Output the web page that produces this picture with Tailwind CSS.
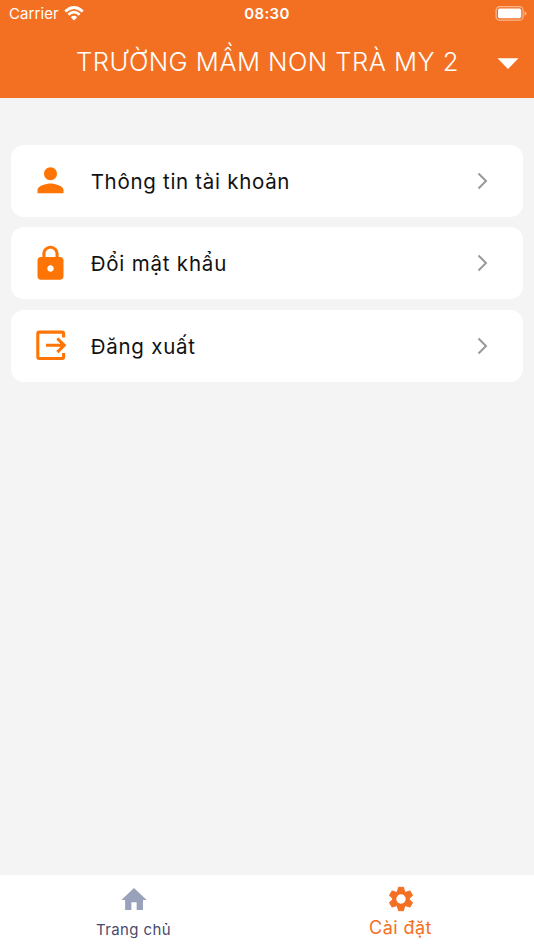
<!DOCTYPE html>
<html lang="vi">
<head>
<meta charset="utf-8">
<title>Cài đặt</title>
<script src="https://cdn.jsdelivr.net/npm/@tailwindcss/browser@4"></script>
</head>
<body class="w-[534px] h-[950px] overflow-hidden bg-[#f4f4f4] flex flex-col font-['Inter','Noto_Sans',sans-serif]">
<header class="h-[98.4px] shrink-0 bg-[#f37022] text-white">
  <div class="h-7 grid grid-cols-3 items-center pl-[9px] pr-[7px]">
    <div class="flex items-center gap-[5px]">
      <span class="text-[15px] leading-7 tracking-[0.1px]">Carrier</span>
      <svg class="w-5 h-[15px] -mt-[2px]" viewBox="0 0 20 15" fill="none" stroke="#fff" stroke-width="2.7"><path d="M1.200 5.400Q10-2.400 18.800 5.400M4.400 8.700Q10 3.700 15.600 8.700"/><path d="M6.800 11.200Q10 8.500 13.200 11.200L10 14.400Z" fill="#fff" stroke="none"/></svg>
    </div>
    <span class="text-center text-[15px] font-semibold leading-7 tracking-[0.4px] -ml-[2px]">08:30</span>
    <svg class="justify-self-end w-[32px] h-[15px] -mt-[2px]" viewBox="0 0 32 15"><rect x="1.1" y=".6" width="27" height="13.6" rx="3.8" fill="none" stroke="#fff" stroke-opacity=".5" stroke-width="1.2"/><rect x="3" y="2.5" width="23.2" height="9.8" rx="2" fill="#fff"/><path d="M29.7 5.2Q31.4 5.7 31.4 7.4T29.7 9.6Z" fill="#fff" fill-opacity=".55"/></svg>
  </div>
  <div class="h-[70px] flex items-center pl-[76px] pr-[15px] justify-between">
    <h1 class="text-[25.6px] font-light leading-[68px] tracking-[0.45px] whitespace-nowrap -mt-[2px]">TRƯỜNG MẦM NON TRÀ MY 2</h1>
    <svg class="w-[22px] h-[11px]" viewBox="0 0 22 11"><path d="M.5 .3H21.500L11 10.900Z" fill="#fff"/></svg>
  </div>
</header>
<main class="flex-1 pt-[46.6px] px-[10.7px] flex flex-col gap-[10.5px]">
  <div class="h-[72px] shrink-0 rounded-[13px] bg-white flex items-center pl-5 pr-[35px]">
    <svg class="w-[39px] h-[39px]" viewBox="0 0 24 24" fill="#ff7505"><path d="M12 11.800c2.210 0 4-1.790 4-4s-1.790-4-4-4-4 1.790-4 4 1.790 4 4 4zm0 2c-2.670 0-8 1.340-8 4v2h16v-2c0-2.660-5.330-4-8-4z"/></svg>
    <span class="ml-[21px] mt-[2px] flex-1 text-[20.5px] tracking-[0.7px] text-[#111]">Thông tin tài khoản</span>
    <svg class="w-[11px] h-[18px]" viewBox="0 0 11 18" fill="none" stroke="#999" stroke-width="2"><path d="M1.500 1.500L9 9L1.500 16.500"/></svg>
  </div>
  <div class="h-[72px] shrink-0 rounded-[13px] bg-white flex items-center pl-5 pr-[35px]">
    <svg class="w-[39px] h-[39px]" viewBox="0 0 24 24" fill="#ff7505"><path d="M18 8h-1V6c0-2.760-2.240-5-5-5S7 3.240 7 6v2H6c-1.100 0-2 .9-2 2v10c0 1.100.9 2 2 2h12c1.100 0 2-.9 2-2V10c0-1.100-.9-2-2-2zm-6 9c-1.100 0-2-.9-2-2s.9-2 2-2 2 .9 2 2-.9 2-2 2zm3.100-9H8.900V6c0-1.710 1.390-3.100 3.100-3.100s3.100 1.390 3.100 3.100v2z"/></svg>
    <span class="ml-[21px] mt-[2px] flex-1 text-[20.5px] tracking-[0.8px] text-[#111]">Đổi mật khẩu</span>
    <svg class="w-[11px] h-[18px]" viewBox="0 0 11 18" fill="none" stroke="#999" stroke-width="2"><path d="M1.500 1.500L9 9L1.500 16.500"/></svg>
  </div>
  <div class="h-[72px] shrink-0 rounded-[13px] bg-white flex items-center pl-5 pr-[35px]">
    <svg class="w-[39px] h-[39px]" viewBox="0 0 39 39" fill="none" stroke="#ff7505" stroke-width="3.1"><path d="M32.600 11.500V7.500Q32.600 6.100 31.200 6.100H8.200Q6.800 6.100 6.800 7.500V31.100Q6.800 32.500 8.200 32.500H31.200Q32.600 32.500 32.600 31.100V27.100M15 19.300H33M26.400 12.500L33.200 19.300L26.400 26.100"/></svg>
    <span class="ml-[21px] mt-[3px] flex-1 text-[20.5px] tracking-[0.75px] text-[#111]">Đăng xuất</span>
    <svg class="w-[11px] h-[18px]" viewBox="0 0 11 18" fill="none" stroke="#999" stroke-width="2"><path d="M1.500 1.500L9 9L1.500 16.500"/></svg>
  </div>
</main>
<nav class="h-[75px] shrink-0 bg-white grid grid-cols-2">
  <div class="flex flex-col items-center pt-[9px]">
    <svg class="w-[30px] h-[30px]" viewBox="0 0 24 24" fill="#9aa1ba"><path d="M9.900 20.800v-6.300h4.200v6.300h5.100V12.800h3L12 3.200 1.900 12.800h3v8z"/></svg>
    <span class="mt-[5px] text-[15px] leading-[22px] tracking-[0.4px] text-[#494a6e]">Trang chủ</span>
  </div>
  <div class="flex flex-col items-center pt-[9px]">
    <svg class="w-[30px] h-[30px]" viewBox="-15 -15 30 30">
      <g fill="#f37022" stroke="#f37022" stroke-width="1" stroke-linejoin="round">
        <path id="bar" d="M-2.500-11.700H2.500L3.600-7V7L2.500 11.700H-2.500L-3.600 7V-7Z"/>
        <use href="#bar" transform="rotate(60)"/>
        <use href="#bar" transform="rotate(120)"/>
        <circle r="8.200"/>
      </g>
      <circle r="4.700" fill="#fff"/>
    </svg>
    <span class="mt-[3px] text-[18px] leading-[22px] tracking-[0.45px] text-[#f37022]">Cài đặt</span>
  </div>
</nav>
</body>
</html>
